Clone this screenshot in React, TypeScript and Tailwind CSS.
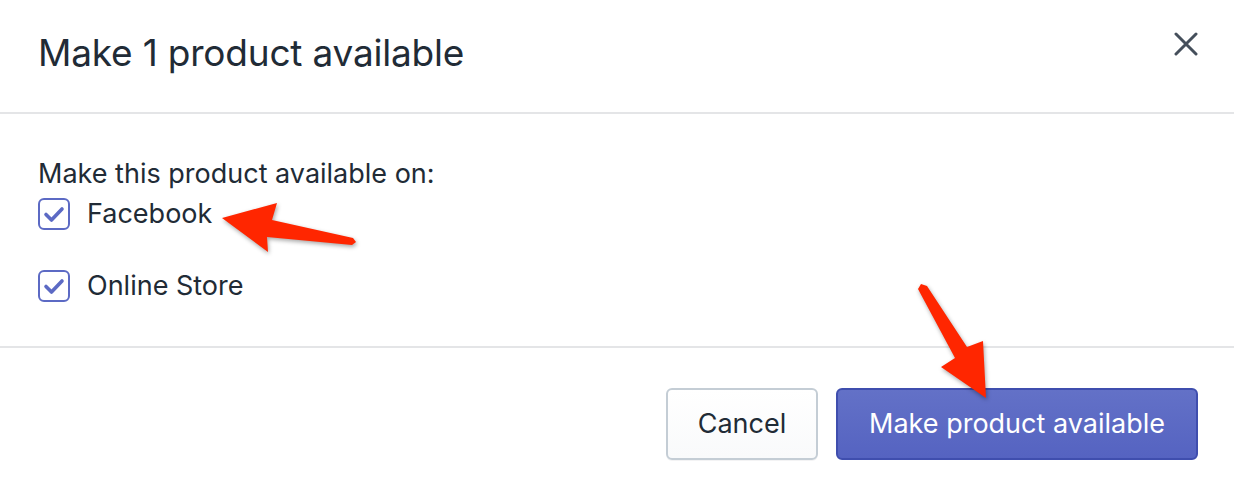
import React from "react";

function CheckIcon() {
  return (
    <svg width="32" height="32" viewBox="0 0 32 32" className="block">
      <path
        d="M8 16.5 L13.5 22 L24 11"
        fill="none"
        stroke="#5c6ac4"
        strokeWidth="3.6"
        strokeLinecap="round"
        strokeLinejoin="round"
      />
    </svg>
  );
}

function Option({ label }: { label: string }) {
  return (
    <label className="flex h-[40px] items-center">
      <span className="h-[32px] w-[32px] rounded-[6px] border-2 border-[#5c6ac4] bg-white">
        <span className="-m-[2px] block">
          <CheckIcon />
        </span>
      </span>
      <span className="ml-[17px] text-[27px] leading-[40px] text-[#212b36]">{label}</span>
    </label>
  );
}

function Arrows() {
  return (
    <svg
      className="pointer-events-none absolute left-0 top-0 drop-shadow-[1px_2px_2px_rgba(0,0,0,0.35)]"
      width="1234"
      height="498"
      viewBox="0 0 1234 498"
    >
      {/* facebook arrow */}
      <polygon
        points="222,218 277,203 272,220 353,238 356,242 352,245 267,237 268,252"
        fill="#ff2600"
      />
      {/* button arrow */}
      <polygon
        points="918,289 921,284 927,286 967,347 983,341 986,398 941,367 955,358"
        fill="#ff2600"
      />
    </svg>
  );
}

export default function App() {
  return (
    <div
      className="relative h-[498px] w-[1234px] overflow-hidden bg-white text-[#212b36]"
      style={{ fontFamily: "Inter, 'Noto Sans', sans-serif" }}
    >
      {/* Header */}
      <div className="flex h-[112px] items-start justify-between pl-[38px] pr-[36px]">
        <h1 className="mt-[27px] text-[37px] leading-[52px] font-normal tracking-[-0.2px]">
          Make 1 product available
        </h1>
        <button className="mt-[32px] h-[24px] w-[24px] text-[#454f5b]">
          <svg width="24" height="24" viewBox="0 0 24 24">
            <path d="M2 2 L22 22 M22 2 L2 22" stroke="#454f5b" strokeWidth="3" strokeLinecap="round" />
          </svg>
        </button>
      </div>
      <div className="h-[2px] bg-[#e4e5e7]" />

      {/* Body */}
      <div className="px-[38px] pb-[40px] pt-[40px]">
        <p className="text-[27px] leading-[40px]">Make this product available on:</p>
        <div className="flex flex-col gap-[32px]">
          <Option label="Facebook" />
          <Option label="Online Store" />
        </div>
      </div>
      <div className="h-[2px] bg-[#e4e5e7]" />

      {/* Footer */}
      <div className="flex justify-end gap-[18px] pr-[36px] pt-[40px]">
        <button className="h-[72px] w-[152px] rounded-[6px] border-2 border-[#c4cdd5] bg-gradient-to-b from-white to-[#f9fafb] text-[27px] text-[#212b36] shadow-[0_1px_0_rgba(22,29,37,0.05)]">
          Cancel
        </button>
        <button className="h-[72px] w-[362px] rounded-[6px] border-2 border-[#3f4eae] bg-gradient-to-b from-[#6371c7] to-[#5563c1] text-[27px] text-white">
          Make product available
        </button>
      </div>

      <Arrows />
    </div>
  );
}
